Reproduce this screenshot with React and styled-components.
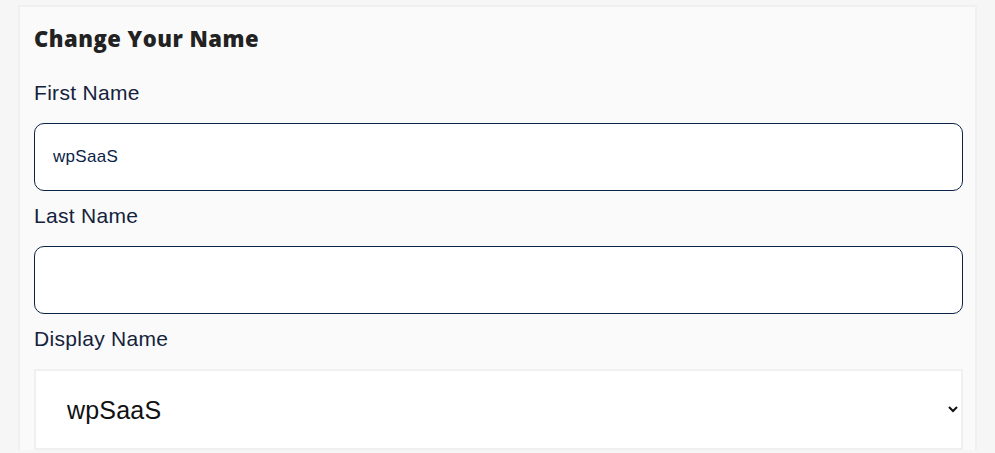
import styled, { createGlobalStyle } from "styled-components";

const GlobalStyle = createGlobalStyle`
  body {
    margin: 0;
    background: #f6f6f6;
    font-family: "Liberation Sans", Arial, sans-serif;
  }
`;

const Page = styled.div`
  padding: 5px 18px 0 18px;
`;

const Card = styled.form`
  background: #fafafa;
  border: 2px solid #f0f0f0;
  border-bottom: none;
  padding: 16px 12px 0 14px;
  display: flex;
  flex-direction: column;
`;

const Title = styled.h2`
  margin: 0 0 15px 0;
  font-family: "Open Sans", sans-serif;
  font-weight: 800;
  font-size: 22px;
  line-height: 30px;
  letter-spacing: 0.5px;
  color: #222222;
`;

const Label = styled.label`
  display: block;
  padding: 13px 0 18px 0;
  font-size: 21px;
  line-height: 24px;
  letter-spacing: 0.3px;
  color: #14223b;
`;

const TextInput = styled.input`
  box-sizing: border-box;
  width: 100%;
  height: 68px;
  padding: 0 18px;
  border: 1px solid #0b2447;
  border-radius: 10px;
  background: #ffffff;
  font-family: "Liberation Sans", Arial, sans-serif;
  font-size: 17px;
  letter-spacing: 0.3px;
  color: #0b2447;
  outline: none;
`;

const Select = styled.select`
  box-sizing: border-box;
  width: 100%;
  height: 81px;
  padding: 0 0 0 27px;
  border: 2px solid #f0f0f0;
  border-radius: 0;
  background: #ffffff;
  font-family: "Liberation Sans", Arial, sans-serif;
  font-size: 25px;
  letter-spacing: 0.2px;
  color: #111111;
  outline: none;
`;

function App() {
  return (
    <Page>
      <GlobalStyle />
      <Card>
        <Title>Change Your Name</Title>
        <Label htmlFor="first">First Name</Label>
        <TextInput id="first" type="text" defaultValue="wpSaaS" />
        <Label htmlFor="last">Last Name</Label>
        <TextInput id="last" type="text" defaultValue="" />
        <Label htmlFor="display">Display Name</Label>
        <Select id="display" defaultValue="wpSaaS">
          <option value="wpSaaS">wpSaaS</option>
        </Select>
      </Card>
    </Page>
  );
}

export default App;
